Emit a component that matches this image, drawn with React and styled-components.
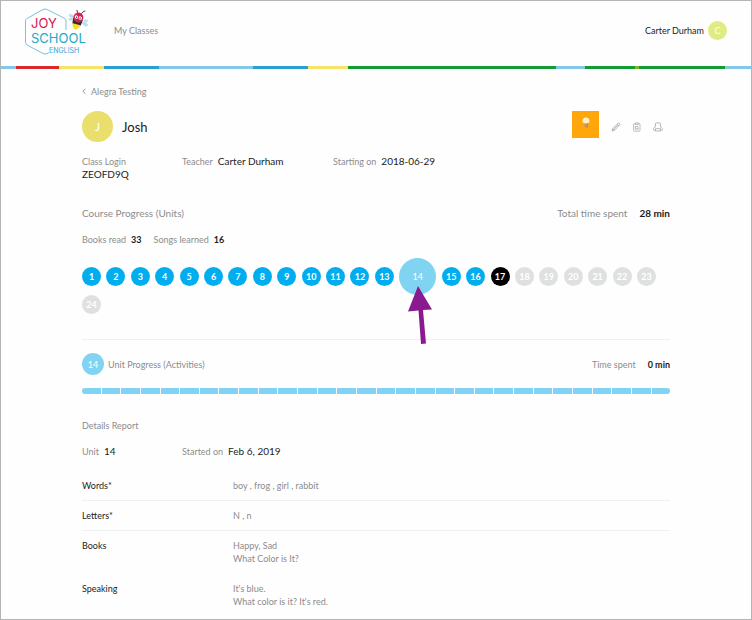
// src/App.jsx

import React from 'react';
import styled, { createGlobalStyle } from 'styled-components';

const GlobalStyle = createGlobalStyle`
	:root {
		--text: #1c1c24;
		--muted: #8c8c8c;
		--line: #f0f0f0;
		--done: #00aeef;
		--current: #80d4f1;
		--locked: #dfe0e0;
		--body-font: Lato, 'Open Sans', sans-serif;
	}
	* {
		box-sizing: border-box;
	}
	body {
		margin: 0;
		background: #fefefe;
		color: var(--text);
		font-family: var(--body-font);
		font-size: 9px;
		line-height: 13px;
	}
	button {
		border: 0;
		padding: 0;
		background: none;
		color: inherit;
		font: inherit;
		cursor: pointer;
	}
	a {
		color: var(--muted);
		text-decoration: none;
	}
`;

const Page = styled.div`
	min-height: 100vh;
	border: 1px solid #b4b4b4;
`;

/************************/
/*        HEADER        */
/************************/

const Header = styled.header`
	display: flex;
	align-items: center;
	height: 65px;
	padding: 0 24px 6px 23px;
	.home {
		display: block;
		height: 50px;
		margin-right: 23px;
	}
`;

const UserButton = styled.button`
	display: flex;
	align-items: center;
	gap: 4px;
	margin-left: auto;
`;

const Avatar = styled.span`
	display: flex;
	align-items: center;
	justify-content: center;
	width: ${(props) => props.$size}px;
	height: ${(props) => props.$size}px;
	border-radius: 50%;
	background: ${(props) => props.$color};
	color: #fff;
	font-size: ${(props) => (props.$size > 30 ? 12 : 9)}px;
`;

const Stripe = styled.div`
	display: flex;
	height: 3px;
`;

const StripePart = styled.span`
	flex: ${(props) => props.$part} 1 0;
	background: ${(props) => props.$color};
`;

/************************/
/*       CONTENT        */
/************************/

const Main = styled.main`
	padding: 16px 81px 0;
`;

const BackLink = styled.a`
	display: inline-flex;
	align-items: center;
	gap: 5px;
`;

const Row = styled.div`
	display: flex;
	align-items: center;
	justify-content: ${(props) => (props.$spread ? 'space-between' : 'flex-start')};
	gap: ${(props) => props.$gap || 0}px;
	margin-top: ${(props) => props.$top || 0}px;
`;

const StudentName = styled.h1`
	margin: 0;
	font-size: 13px;
	font-weight: 400;
	line-height: 16px;
`;

const Tools = styled.div`
	display: flex;
	align-items: center;
	gap: 11px;
	padding-right: 7px;
`;

const Tool = styled.button`
	display: flex;
	width: 10px;
	height: 10px;
	color: #a4a4a4;
`;

const BadgeTool = styled.button`
	display: flex;
	justify-content: center;
	width: 27px;
	height: 27px;
	margin: 0 1px 4px 0;
	padding-top: 6px;
	background: #ffa60a;
`;

const Facts = styled.dl`
	display: grid;
	grid-template-columns: 100px 151px auto;
	margin: ${(props) => props.$top}px 0 0;
`;

const Fact = styled.div`
	display: flex;
	flex-direction: ${(props) => (props.$stacked ? 'column' : 'row')};
	gap: ${(props) => (props.$stacked ? 0 : props.$gap || 5)}px;
	dt {
		color: var(--muted);
	}
	dd {
		margin: 0;
		font-size: ${(props) => (props.$small ? 9 : 10)}px;
		font-weight: ${(props) => (props.$strong ? 700 : 400)};
	}
`;

const FactList = styled.dl`
	display: flex;
	gap: 12px;
	margin: ${(props) => props.$top || 0}px 0 0;
	font-size: ${(props) => (props.$large ? 10 : 9)}px;
`;

const Heading = styled.h2`
	margin: 0;
	color: var(--muted);
	font-size: ${(props) => (props.$large ? 10 : 9)}px;
	font-weight: 400;
`;

const Units = styled.ol`
	display: flex;
	flex-wrap: wrap;
	align-items: center;
	justify-content: space-between;
	column-gap: 5px;
	margin: 12px 0 0;
	padding: 0 14px 0 0;
	list-style: none;
	li {
		position: relative;
	}
`;

const unitColors = {
	done: 'var(--done)',
	current: 'var(--current)',
	next: '#000',
	locked: 'var(--locked)',
};

const UnitButton = styled.button`
	display: block;
	width: ${(props) => (props.$state === 'current' ? 37 : 19)}px;
	height: ${(props) => (props.$state === 'current' ? 37 : 19)}px;
	border-radius: 50%;
	background: ${(props) => unitColors[props.$state]};
	color: #fff;
	font-weight: ${(props) => (props.$state === 'current' ? 400 : 700)};
	text-align: center;
`;

const Pointer = styled.svg`
	position: absolute;
	top: 28px;
	left: 8px;
	z-index: 1;
	pointer-events: none;
`;

const UnitProgress = styled.section`
	margin-top: 25px;
	padding-top: 13px;
	border-top: 1px solid var(--line);
`;

const Activities = styled.div`
	display: flex;
	gap: 1px;
	height: 6px;
	margin-top: 13px;
	border-radius: 3px;
	overflow: hidden;
	span {
		flex: 1;
		background: var(--current);
	}
`;

const Report = styled.table`
	width: 100%;
	margin-top: 13px;
	border-collapse: separate;
	border-spacing: 0;
	th,
	td {
		padding: 8px 0;
		border-bottom: 1px solid transparent;
		font-weight: 400;
		text-align: left;
		vertical-align: top;
	}
	th {
		width: 151px;
	}
	td {
		color: var(--muted);
	}
	.ruled > * {
		border-color: var(--line);
	}
`;

const stripes = [
	['#85c8e6', 15],
	['#d8292f', 43],
	['#f6e36a', 45],
	['#2a9fd0', 55],
	['#85c8e6', 94],
	['#2a9fd0', 55],
	['#f6e36a', 40],
	['#149b34', 208],
	['#85c8e6', 29],
	['#149b34', 50],
	['#7cb42c', 4],
	['#149b34', 86],
	['#85c8e6', 26],
];

const units = Array.from({ length: 24 }, (_, i) => {
	const number = i + 1;
	if (number === 14) return { number, state: 'current' };
	if (number === 17) return { number, state: 'next' };
	return { number, state: number < 17 ? 'done' : 'locked' };
});

const report = [
	{ name: 'Words*', lines: ['boy , frog , girl , rabbit'], ruled: true },
	{ name: 'Letters*', lines: ['N , n'], ruled: true },
	{ name: 'Books', lines: ['Happy, Sad', 'What Color is It?'] },
	{ name: 'Speaking', lines: ["It's blue.", "What color is it? It's red."] },
];

function Logo() {
	return (
		<svg width='67' height='50' viewBox='24 4 67 50' role='img' aria-label='Joy School English'>
			<path
				d='M66 28V19Q66 17 64 16L47 7.5Q45 6.500 43 7.500L27 16.500Q25.500 17.500 25.500 19V40Q25.500 42 27 43L43 51.500Q45 52.500 47 51.500L49 50.500'
				fill='none'
				stroke='#6cbcd4'
				strokeWidth='0.9'
			/>
			<g fontFamily='Inter, Lato, sans-serif'>
				<text x='31' y='26' fontSize='13' fill='#d3204c'>JOY</text>
				<text x='31' y='41' fontSize='13' fill='#22a9c6'>SCHOOL</text>
				<text x='49' y='51' fontSize='7' fill='#35a6dc'>ENGLISH</text>
			</g>
			<g fill='#b9dcf2'>
				<ellipse cx='71.500' cy='14' rx='3' ry='1.600' transform='rotate(25 71.500 14)' />
				<ellipse cx='70.800' cy='17.300' rx='2.300' ry='1.300' />
				<ellipse cx='85' cy='22' rx='3.200' ry='1.700' transform='rotate(35 85 22)' />
				<ellipse cx='86' cy='18.800' rx='2' ry='1.200' />
			</g>
			<g transform='rotate(15 78 17)'>
				<path d='M73.500 19.500H82.500Q82 27 78 28Q74 27 73.500 19.500Z' fill='#f5df22' />
				<path d='M73 17H83L82.300 22.500Q78 24 73.700 22.500Z' fill='#2b2b33' />
				<path d='M74 22.500H82L81.500 24H74.500Z' fill='#f5df22' />
				<circle cx='78' cy='15.500' r='5' fill='#d91e50' />
				<circle cx='76' cy='15.500' r='1.700' fill='#fff' />
				<circle cx='80' cy='15.500' r='1.700' fill='#fff' />
				<circle cx='76.200' cy='15.600' r='0.700' fill='#222' />
				<circle cx='79.800' cy='15.600' r='0.700' fill='#222' />
				<path d='M76 11L74.500 8.500M80 11L81.500 8L83 7.500' stroke='#54343c' strokeWidth='0.900' fill='none' />
			</g>
		</svg>
	);
}

function PencilIcon() {
	return (
		<svg width='10' height='10' viewBox='0 0 10 10' fill='none' stroke='currentColor' strokeWidth='0.8'>
			<path d='M1 9L1.700 6.600L7 1.300Q7.800 0.700 8.600 1.400Q9.300 2.200 8.700 3L3.400 8.300ZM6 2.300L7.700 4M1.700 6.600L3.400 8.300M2.600 7.400L7 3' />
		</svg>
	);
}

function ClipboardIcon() {
	return (
		<svg width='10' height='10' viewBox='0 0 10 10' fill='none' stroke='currentColor' strokeWidth='0.7'>
			<path d='M3.300 1.600H2.300Q1.600 1.600 1.600 2.300V8.500Q1.600 9.200 2.300 9.200H7.300Q8 9.200 8 8.500V2.300Q8 1.600 7.300 1.600H6.300M3.300 0.900H6.300V2.500H3.300ZM3.400 4.500H6.200M3.400 4.500V7.200H6.200V5.800L4.700 6.300' />
		</svg>
	);
}

function PrinterIcon() {
	return (
		<svg width='10' height='10' viewBox='0 0 10 10' fill='none' stroke='currentColor' strokeWidth='0.8'>
			<path d='M2.400 5V1.700Q2.400 0.900 3.200 0.900H6.600Q7.400 0.900 7.400 1.700V5M2.400 4.800L1 5.800Q0.500 6.200 0.500 6.800V7.700Q0.500 8.300 1.200 8.300H2.400M7.400 4.800L8.800 5.800Q9.300 6.200 9.300 6.800V7.700Q9.300 8.300 8.600 8.300H7.400M2.400 6.700H7.400V9H2.400Z' />
		</svg>
	);
}

function BadgeIcon() {
	return (
		<svg width='10' height='12' viewBox='0 0 10 12'>
			<path d='M3.500 6H6.800V10.500H3.500Z' fill='#c79a55' />
			<path d='M5.500 6H6.800V10.500H5.500Z' fill='#a58a68' />
			<path d='M1.500 4.500Q1.500 0.500 5 0.500Q8.500 0.500 8.500 4.500Q8.300 6 7 5.700Q5 7.500 3 5.700Q1.700 6 1.500 4.500Z' fill='#fdeecb' />
			<path d='M2.500 3.500Q3 1.500 5 1.500' stroke='#fff' fill='none' />
		</svg>
	);
}

export default function App() {
	return (
		<Page>
			<GlobalStyle />
			<Header>
				<a className='home' href='#home'>
					<Logo />
				</a>
				<nav>
					<a href='#classes'>My Classes</a>
				</nav>
				<UserButton type='button'>
					Carter Durham
					<Avatar $size={19} $color='#dfec83'>C</Avatar>
				</UserButton>
			</Header>
			<Stripe>
				{stripes.map(([color, part], i) => (
					<StripePart key={i} $color={color} $part={part} />
				))}
			</Stripe>

			<Main>
				<BackLink href='#class'>
					<svg width='4' height='7' viewBox='0 0 4 7' fill='none' stroke='currentColor' strokeWidth='0.9'>
						<path d='M3.400 0.800L0.800 3.300L3.400 5.800' />
					</svg>
					Alegra Testing
				</BackLink>

				<Row $spread $top={13}>
					<Row $gap={9}>
						<Avatar $size={31} $color='#eadf6c'>J</Avatar>
						<StudentName>Josh</StudentName>
					</Row>
					<Tools>
						<BadgeTool type='button' aria-label='Badge'>
							<BadgeIcon />
						</BadgeTool>
						<Tool type='button' aria-label='Edit'>
							<PencilIcon />
						</Tool>
						<Tool type='button' aria-label='Report'>
							<ClipboardIcon />
						</Tool>
						<Tool type='button' aria-label='Print'>
							<PrinterIcon />
						</Tool>
					</Tools>
				</Row>

				<Facts $top={13}>
					<Fact $stacked>
						<dt>Class Login</dt>
						<dd>ZEOFD9Q</dd>
					</Fact>
					<Fact>
						<dt>Teacher</dt>
						<dd>Carter Durham</dd>
					</Fact>
					<Fact>
						<dt>Starting on</dt>
						<dd>2018-06-29</dd>
					</Fact>
				</Facts>

				<Row $spread $top={26}>
					<Heading $large>Course Progress (Units)</Heading>
					<FactList $large>
						<Fact $gap={12} $strong>
							<dt>Total time spent</dt>
							<dd>28 min</dd>
						</Fact>
					</FactList>
				</Row>
				<FactList $top={13}>
					<Fact $small $strong>
						<dt>Books read</dt>
						<dd>33</dd>
					</Fact>
					<Fact $small $strong>
						<dt>Songs learned</dt>
						<dd>16</dd>
					</Fact>
				</FactList>

				<Units>
					{units.map((unit) => (
						<li key={unit.number}>
							<UnitButton type='button' $state={unit.state}>
								{unit.number}
							</UnitButton>
							{unit.state === 'current' && (
								<Pointer width='28' height='60' viewBox='0 0 28 60'>
									<path d='M11 0L25 23.500L16 24L19 57.500L14 58L11.500 24.500L1 25.500Z' fill='#8a1a8f' />
								</Pointer>
							)}
						</li>
					))}
				</Units>

				<UnitProgress>
					<Row $spread>
						<Row $gap={4}>
							<Avatar $size={22} $color='var(--current)'>14</Avatar>
							<Heading>Unit Progress (Activities)</Heading>
						</Row>
						<FactList>
							<Fact $gap={12} $small $strong>
								<dt>Time spent</dt>
								<dd>0 min</dd>
							</Fact>
						</FactList>
					</Row>
					<Activities>
						{Array.from({ length: 30 }, (_, i) => (
							<span key={i} />
						))}
					</Activities>
				</UnitProgress>

				<Row $top={25}>
					<Heading>Details Report</Heading>
				</Row>
				<Facts $top={13}>
					<Fact>
						<dt>Unit</dt>
						<dd>14</dd>
					</Fact>
					<Fact>
						<dt>Started on</dt>
						<dd>Feb 6, 2019</dd>
					</Fact>
				</Facts>

				<Report>
					<tbody>
						{report.map((row) => (
							<tr key={row.name} className={row.ruled ? 'ruled' : undefined}>
								<th scope='row'>{row.name}</th>
								<td>
									{row.lines.map((line) => (
										<div key={line}>{line}</div>
									))}
								</td>
							</tr>
						))}
					</tbody>
				</Report>
			</Main>
		</Page>
	);
}
